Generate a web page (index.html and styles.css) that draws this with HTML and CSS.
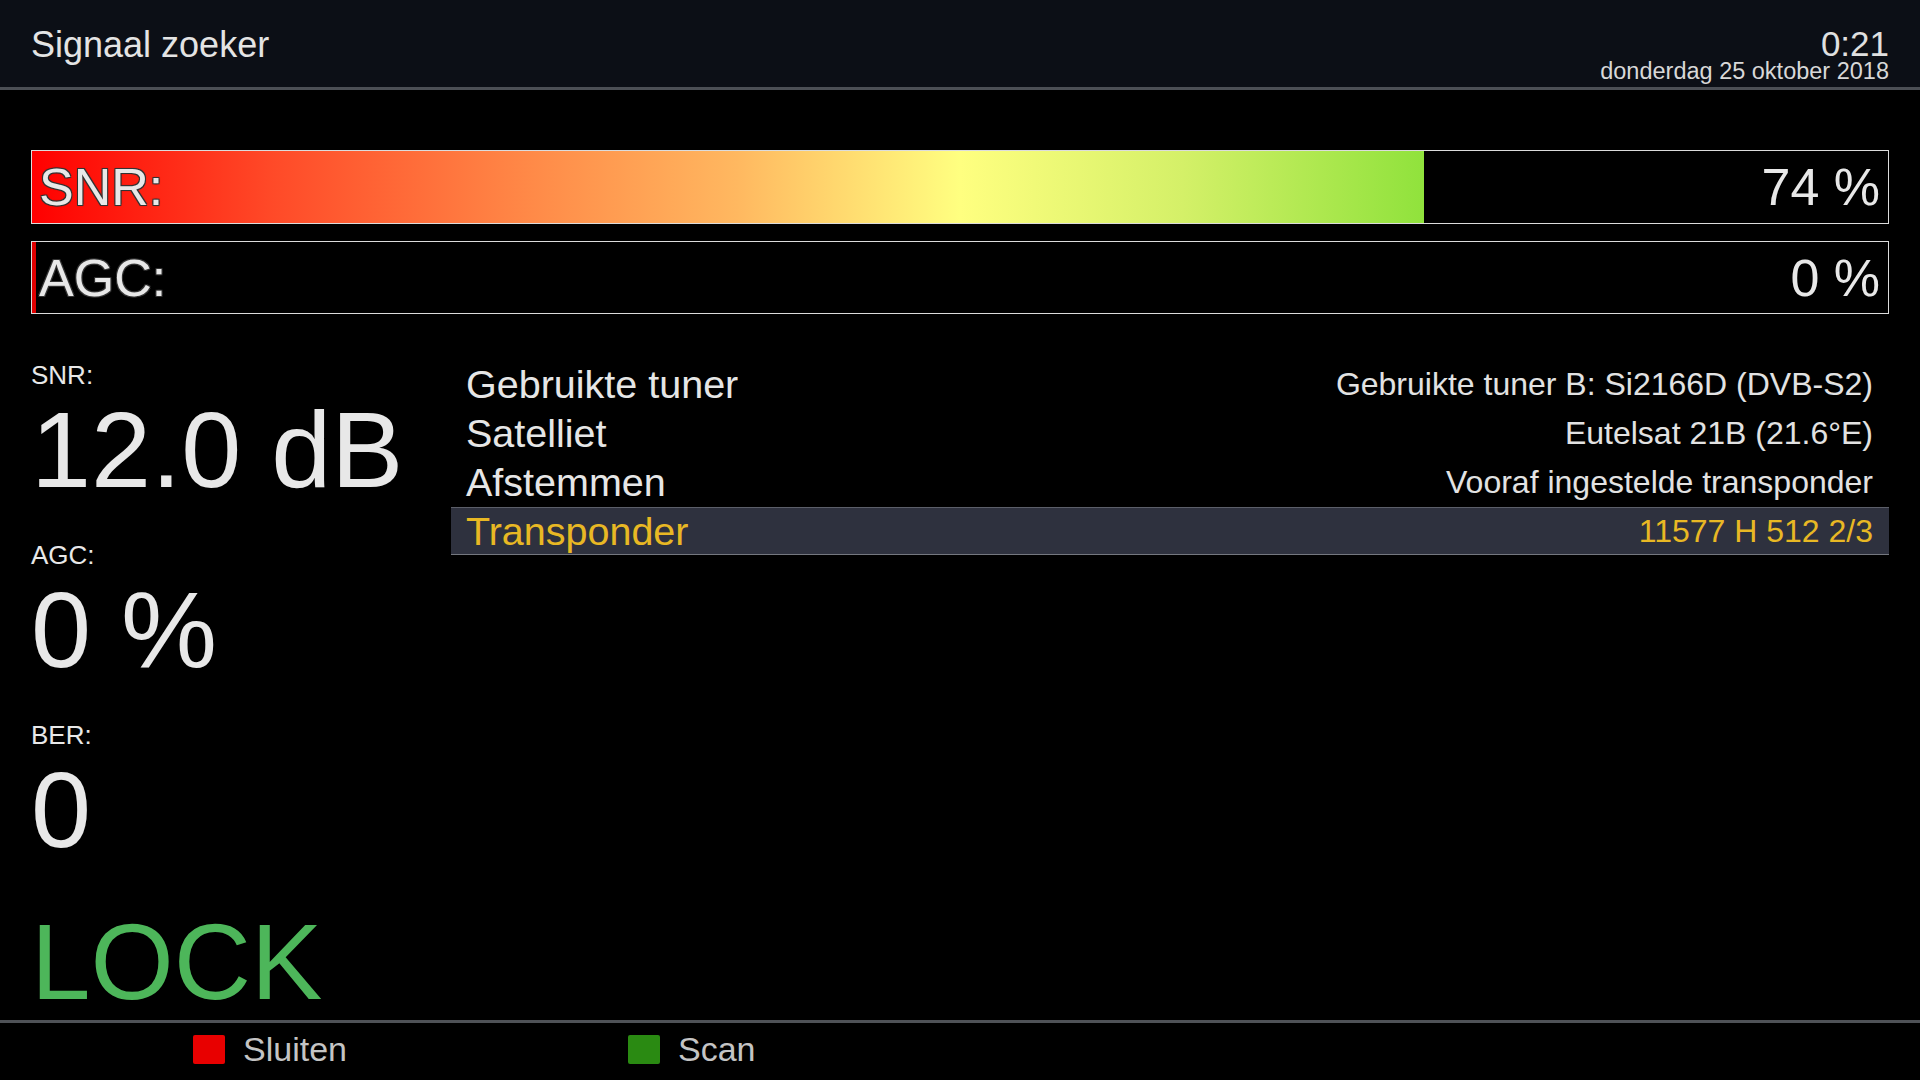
FILE: index.html
```html
<!DOCTYPE html>
<html lang="nl">
<head>
  <meta charset="UTF-8" />
  <meta name="viewport" content="width=device-width, initial-scale=1.0" />
  <title>Signaal zoeker</title>
  <link rel="stylesheet" href="styles.css">
</head>
<body>
  <div id="screen">
    <div id="header">
      <div id="title">Signaal zoeker</div>
      <div id="clock">
        <div class="time">0:21</div>
        <div class="date">donderdag 25 oktober 2018</div>
      </div>
    </div>

    <div id="main">
      <div class="bars">
        <div class="bar">
          <div class="fill snr-fill" style="width: 75%;"></div>
          <span class="bar-label">SNR:</span>
          <span class="bar-value">74 %</span>
        </div>
        <div class="bar">
          <div class="fill agc-fill" style="width: 4px;"></div>
          <span class="bar-label">AGC:</span>
          <span class="bar-value">0 %</span>
        </div>
      </div>

      <div class="content">
        <div class="stats">
          <div class="stat">
            <div class="stat-label">SNR:</div>
            <div class="stat-value">12.0 dB</div>
          </div>
          <div class="stat">
            <div class="stat-label">AGC:</div>
            <div class="stat-value">0 %</div>
          </div>
          <div class="stat">
            <div class="stat-label">BER:</div>
            <div class="stat-value">0</div>
          </div>
          <div class="lock">LOCK</div>
        </div>

        <ul class="info">
          <li><span class="key">Gebruikte tuner</span><span class="val">Gebruikte tuner B: Si2166D (DVB-S2)</span></li>
          <li><span class="key">Satelliet</span><span class="val">Eutelsat 21B (21.6°E)</span></li>
          <li><span class="key">Afstemmen</span><span class="val">Vooraf ingestelde transponder</span></li>
          <li class="selected"><span class="key">Transponder</span><span class="val">11577 H 512 2/3</span></li>
        </ul>
      </div>
    </div>

    <div id="footer">
      <div class="button"><span class="key-red"></span>Sluiten</div>
      <div class="button"><span class="key-green"></span>Scan</div>
    </div>
  </div>
</body>
</html>
```

FILE: styles.css
```css
* {
  box-sizing: border-box;
}

body {
  margin: 0;
  padding: 0;
  background-color: #000;
  color: #e6e6e6;
  font-family: "Liberation Sans", Arial, sans-serif;
  overflow: hidden;
}

#screen {
  width: 1920px;
  height: 1080px;
  display: flex;
  flex-direction: column;
}

#header {
  height: 90px;
  padding: 27px 31px 0 31px;
  background-color: #0c0f16;
  border-bottom: 3px solid #4c4f55;
  display: flex;
  justify-content: space-between;
  align-items: flex-start;
}

#title {
  font-size: 36px;
  line-height: 36px;
  color: #e4e4e4;
}

#clock {
  text-align: right;
  color: #e0e0e0;
}

#clock .time {
  margin-top: 1px;
  font-size: 35px;
  line-height: 31px;
}

#clock .date {
  font-size: 23.5px;
  line-height: 24px;
  color: #d8d8d8;
}

#main {
  flex: 1;
  padding: 60px 31px 0 31px;
}

.bars {
  display: flex;
  flex-direction: column;
  gap: 17px;
}

.bar {
  position: relative;
  height: 74px;
  border: 1px solid #dcdcdc;
  display: flex;
  justify-content: space-between;
  align-items: center;
  padding: 0 8px 0 7px;
  font-size: 52px;
}

.bar:last-child {
  height: 73px;
}

.fill {
  position: absolute;
  left: 0;
  top: 0;
  bottom: 0;
}

.snr-fill {
  background: linear-gradient(to right, #ff0000 0%, #ff4a28 13%, #ff8a48 27%, #ffb860 38%, #ffff80 50%, #d4f068 62%, #90e23c 75%, #60d020 100%);
  background-size: 133.33% 100%;
}

.agc-fill {
  background-color: #e00000;
}

.bar-label,
.bar-value {
  position: relative;
  color: #e8e8e8;
  line-height: 1;
}

.bar-label {
  text-shadow: -1px -1px 0 #333, 1px -1px 0 #333, -1px 1px 0 #333, 1px 1px 0 #333, 0 0 2px #222;
}

.content {
  display: flex;
  margin-top: 46px;
}

.stats {
  width: 420px;
}

.stat {
  margin-bottom: 35px;
}

.stat-label {
  font-size: 26px;
  line-height: 30px;
  color: #e8e8e8;
}

.stat-value {
  margin-top: 5px;
  font-size: 108px;
  line-height: 110px;
  color: #e8e8e8;
}

.lock {
  padding-top: 7px;
  font-size: 107px;
  line-height: 110px;
  color: #4db65a;
}

.info {
  flex: 1;
  list-style-type: none;
  margin: 0;
  padding: 0;
}

.info li {
  height: 49px;
  display: flex;
  justify-content: space-between;
  align-items: center;
  padding: 0 16px 0 15px;
}

.info .key {
  font-size: 39.5px;
  color: #e6e6e6;
}

.info .val {
  font-size: 32px;
  color: #e2e2e2;
}

.info li.selected {
  height: 48px;
  background-color: #2e313e;
  border-top: 1px solid #5c5f69;
  border-bottom: 1px solid #74777f;
}

.info li.selected .key,
.info li.selected .val {
  color: #e8b824;
}

#footer {
  height: 60px;
  border-top: 3px solid #4f5257;
  padding-left: 193px;
  padding-bottom: 4px;
  display: flex;
  align-items: center;
}

.button {
  width: 435px;
  display: flex;
  align-items: center;
  gap: 18px;
  font-size: 34px;
  color: #c4c4c4;
}

.key-red,
.key-green {
  width: 32px;
  height: 29px;
  border-radius: 2px;
}

.key-red {
  background-color: #e80000;
}

.key-green {
  background-color: #2a8a12;
}
```
